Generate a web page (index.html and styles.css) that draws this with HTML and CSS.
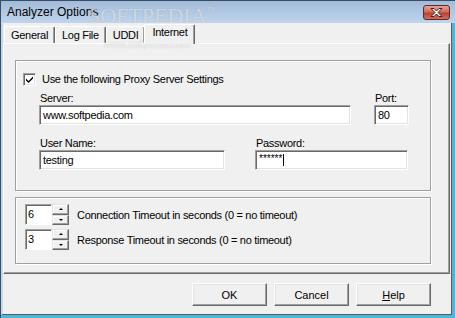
FILE: index.html
```html
<!DOCTYPE html>
<html lang="en">
<head>
    <meta charset="UTF-8">
    <title>Analyzer Options</title>
    <link rel="stylesheet" href="styles.css">
</head>
<body>
    <div class="window">
        <div class="titlebar">
            <span class="title">Analyzer Options</span>
            <div class="close">
                <svg width="15" height="11" viewBox="0 0 15 11">
                    <path d="M2 1.5h3l2.5 2.5 2.5-2.5h3l-4 4 4 4h-3l-2.5-2.5-2.5 2.5h-3l4-4z" fill="#fff" stroke="#4a1f1c" stroke-width="1" stroke-linejoin="round"/>
                </svg>
            </div>
        </div>

        <div class="client">
            <!-- tabs -->
            <div class="tabs">
                <div class="tab">General</div>
                <div class="tab">Log File</div>
                <div class="tab">UDDI</div>
                <div class="tab active">Internet</div>
            </div>

            <div class="panel">
                <!-- proxy settings -->
                <div class="group proxy">
                    <div class="check-row">
                        <span class="checkbox">
                            <svg width="9" height="9" viewBox="0 0 9 9">
                                <path d="M1 3.5l2.5 2.5 4.5-4.5v2l-4.5 4.5-2.5-2.5z" fill="#000"/>
                            </svg>
                        </span>
                        <span>Use the following Proxy Server Settings</span>
                    </div>
                    <div class="field-row first">
                        <div class="field server">
                            <div class="label">Server:</div>
                            <div class="edit">www.softpedia.com</div>
                        </div>
                        <div class="field port">
                            <div class="label">Port:</div>
                            <div class="edit">80</div>
                        </div>
                    </div>
                    <div class="field-row">
                        <div class="field user">
                            <div class="label">User Name:</div>
                            <div class="edit">testing</div>
                        </div>
                        <div class="field password">
                            <div class="label">Password:</div>
                            <div class="edit"><span class="stars">******</span><span class="caret"></span></div>
                        </div>
                    </div>
                </div>

                <!-- timeouts -->
                <div class="group timeouts">
                    <div class="spin-row">
                        <div class="spin-edit">6</div>
                        <div class="spin-buttons">
                            <div class="spin-btn"><span class="arrow up"></span></div>
                            <div class="spin-btn"><span class="arrow down"></span></div>
                        </div>
                        <span class="spin-label">Connection Timeout in seconds (0 = no timeout)</span>
                    </div>
                    <div class="spin-row">
                        <div class="spin-edit">3</div>
                        <div class="spin-buttons">
                            <div class="spin-btn"><span class="arrow up"></span></div>
                            <div class="spin-btn"><span class="arrow down"></span></div>
                        </div>
                        <span class="spin-label">Response Timeout in seconds (0 = no timeout)</span>
                    </div>
                </div>
            </div>

            <div class="buttons">
                <button class="button">OK</button>
                <button class="button">Cancel</button>
                <button class="button"><u>H</u>elp</button>
            </div>
        </div>

        <div class="watermark">SOFTPEDIA<sup>™</sup></div>
        <div class="watermark-url">www.softpedia.com</div>
    </div>
</body>
</html>
```

FILE: styles.css
```css
* {
    margin: 0;
    padding: 0;
    box-sizing: border-box;
}

body {
    background: #fff;
    font-family: "Liberation Sans", Arial, sans-serif;
    font-size: 11px;
    letter-spacing: -0.3px;
    color: #000;
}

.window {
    width: 455px;
    height: 318px;
    display: flex;
    flex-direction: column;
    background: #4db7db;
    border-top: 1px solid #3a4d66;
    border-left: 1px solid #3a4d66;
    position: relative;
    overflow: hidden;
}

/* title bar */
.titlebar {
    height: 22px;
    display: flex;
    align-items: center;
    justify-content: space-between;
    padding: 0 5px 0 6px;
    background: linear-gradient(#a2bbd8, #bfd5ee);
}

.title {
    font-size: 12px;
    letter-spacing: 0;
    color: #000;
}

.close {
    width: 27px;
    height: 15px;
    margin-top: 1px;
    border: 1px solid #5b2b29;
    border-radius: 3px;
    background: linear-gradient(#e8a495, #cf6b58 45%, #b9412f 55%, #d0705c);
    display: flex;
    align-items: center;
    justify-content: center;
}

/* client area */
.client {
    flex: 1;
    margin: 0 3px 3px 0;
    background: #f0f0f0;
    border-left: 2px solid #c6d8ec;
    border-right: 1px solid #5a5a5a;
    border-bottom: 1px solid #5a5a5a;
    display: flex;
    flex-direction: column;
}

.tabs {
    height: 20px;
    display: flex;
    align-items: flex-end;
    padding-left: 1px;
}

.tab {
    height: 17px;
    padding: 0 6px;
    line-height: 16px;
    border: 1px solid #fff;
    border-right-color: #696969;
    border-bottom: none;
    border-radius: 2px 2px 0 0;
    box-shadow: inset -1px 0 #a0a0a0;
}

.tab.active {
    height: 20px;
    margin: 0 0 -1px -1px;
    padding: 0 7px 0 7px;
    line-height: 15px;
    background: #f0f0f0;
    position: relative;
    z-index: 1;
}

.panel {
    width: 447px;
    height: 231px;
    padding: 16px 0 0 11px;
    border: 1px solid #fff;
    border-right-color: #696969;
    border-bottom-color: #696969;
    box-shadow: inset -1px -1px #a0a0a0;
}

.group {
    width: 416px;
    border: 1px solid #a0a0a0;
    box-shadow: 1px 1px 0 #fff, inset 1px 1px 0 #fff;
}

.proxy {
    height: 131px;
    padding: 12px 0 0 7px;
}

.check-row {
    height: 13px;
    display: flex;
    align-items: center;
    gap: 6px;
    line-height: 13px;
}

.checkbox {
    width: 13px;
    height: 13px;
    background: #fff;
    border: 1px solid #a0a0a0;
    border-right-color: #fff;
    border-bottom-color: #fff;
    box-shadow: inset 1px 1px #696969, inset -1px -1px #e3e3e3;
    display: flex;
    align-items: center;
    justify-content: center;
}

.field-row {
    display: flex;
    margin-top: 12px;
    padding-left: 16px;
}

.field-row.first {
    margin-top: 6px;
}

.label {
    height: 13px;
    line-height: 13px;
    padding-left: 1px;
}

.edit {
    height: 20px;
    background: #fff;
    border: 1px solid #a0a0a0;
    border-right-color: #fff;
    border-bottom-color: #fff;
    box-shadow: inset 1px 1px #696969, inset -1px -1px #e3e3e3;
    padding-left: 3px;
    line-height: 18px;
    white-space: nowrap;
    display: flex;
    align-items: center;
}

.server .edit { width: 312px; }
.port { margin-left: 23px; }
.port .edit { width: 35px; }
.user .edit { width: 186px; }
.password { margin-left: 30px; }
.password .edit { width: 153px; }

.stars {
    font-size: 10px;
    line-height: 10px;
    letter-spacing: 0;
    align-self: flex-start;
    margin-top: 3px;
}

.caret {
    width: 1px;
    height: 12px;
    background: #000;
    margin-left: 1px;
}

.timeouts {
    height: 67px;
    margin-top: 6px;
    padding: 6px 0 0 9px;
    display: flex;
    flex-direction: column;
    gap: 4px;
}

.spin-row {
    height: 21px;
    display: flex;
    align-items: center;
}

.spin-edit {
    width: 27px;
    height: 21px;
    background: #fff;
    border: 1px solid #a0a0a0;
    border-right-color: #fff;
    border-bottom-color: #fff;
    box-shadow: inset 1px 1px #696969;
    padding-left: 2px;
    line-height: 18px;
}

.spin-buttons {
    width: 17px;
    height: 21px;
    display: flex;
    flex-direction: column;
}

.spin-btn {
    flex: 1;
    background: #f0f0f0;
    border: 1px solid #e3e3e3;
    border-right-color: #696969;
    border-bottom-color: #696969;
    box-shadow: inset -1px -1px #a0a0a0, inset 1px 1px #fff;
    display: flex;
    align-items: center;
    justify-content: center;
}

.arrow {
    width: 0;
    height: 0;
    border-left: 2px solid transparent;
    border-right: 2px solid transparent;
}

.arrow.up { border-bottom: 2px solid #000; }
.arrow.down { border-top: 2px solid #000; }

.spin-label {
    margin-left: 8px;
}

/* dialog buttons */
.buttons {
    display: flex;
    justify-content: flex-end;
    gap: 7px;
    margin-top: 9px;
    padding-right: 20px;
}

.button {
    width: 75px;
    height: 23px;
    font: inherit;
    color: #000;
    background: #f0f0f0;
    border: 1px solid #fff;
    border-right-color: #696969;
    border-bottom-color: #696969;
    box-shadow: inset -1px -1px #a0a0a0, inset 1px 1px #e3e3e3;
}

/* watermark */
.watermark {
    position: absolute;
    left: 87px;
    top: 2px;
    font-family: "Liberation Serif", serif;
    font-size: 22px;
    letter-spacing: 0;
    color: rgba(255, 255, 255, 0.55);
    text-shadow: 0 0 1px rgba(90, 90, 90, 0.35);
}

.watermark sup {
    font-size: 9px;
    vertical-align: 10px;
}

.watermark-url {
    position: absolute;
    left: 103px;
    top: 38px;
    font-size: 10px;
    letter-spacing: 0;
    color: rgba(255, 255, 255, 0.7);
    text-shadow: 0 0 1px rgba(120, 120, 120, 0.4);
}
```
